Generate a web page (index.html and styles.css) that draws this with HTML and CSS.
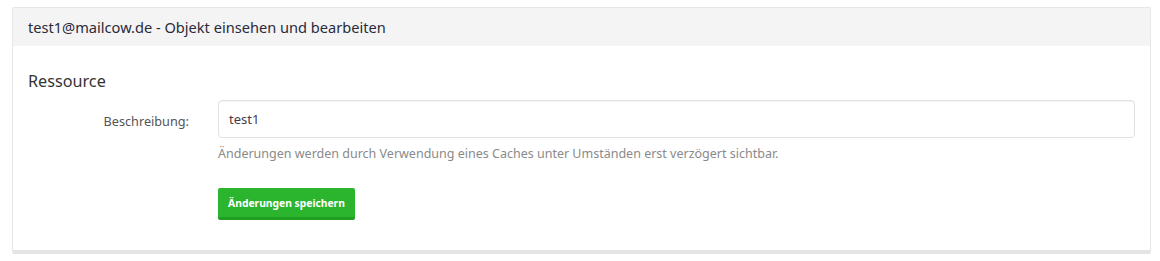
FILE: index.html
```html
<!DOCTYPE html>
<html lang="de">
<head>
<meta charset="utf-8">
<title>Objekt bearbeiten</title>
<link rel="stylesheet" href="styles.css">
</head>
<body>
<div class="panel">
  <div class="panel-heading">test1@mailcow.de - Objekt einsehen und bearbeiten</div>
  <div class="panel-body">
    <h4 class="section-title">Ressource</h4>
    <div class="form-row">
      <label class="form-label" for="desc">Beschreibung:</label>
      <div class="form-field">
        <input id="desc" class="form-input" type="text" value="test1">
        <p class="help">Änderungen werden durch Verwendung eines Caches unter Umständen erst verzögert sichtbar.</p>
      </div>
    </div>
    <div class="form-row">
      <div class="form-label"></div>
      <div class="form-field">
        <button class="btn-save" type="button">Änderungen speichern</button>
      </div>
    </div>
  </div>
</div>
</body>
</html>
```

FILE: styles.css
```css
html, body {
  margin: 0;
  padding: 0;
  background: #fff;
}
body {
  font-family: "Noto Sans", "Open Sans", sans-serif;
  font-size: 13px;
  color: #333;
  padding: 7px 9px 0 12px;
}
.panel {
  border: 1px solid #e6e6e6;
  border-bottom: 4px solid #e5e5e5;
  border-radius: 2px;
  background: #fff;
  height: 247px;
  box-sizing: border-box;
}
.panel-heading {
  background: #f4f4f4;
  height: 38px;
  box-sizing: border-box;
  padding: 9px 15px 0 15px;
  font-size: 14.6px;
  color: #2a2a3a;
}
.panel-body {
  padding: 24px 15px 0 15px;
}
.section-title {
  margin: 0;
  font-size: 16.2px;
  font-weight: normal;
  color: #333;
  height: 30px;
}
.form-row {
  display: flex;
}
.form-label {
  width: 161px;
  flex: none;
  text-align: right;
  padding-top: 12px;
  font-size: 12.7px;
  color: #555;
}
.form-field {
  margin-left: 29px;
  flex: 1;
}
.form-input {
  display: block;
  width: 100%;
  box-sizing: border-box;
  height: 38px;
  border: 1px solid #e2e2e2;
  border-radius: 4px;
  padding: 0 10px;
  font-family: inherit;
  font-size: 13px;
  color: #4a3a4a;
  box-shadow: inset 0 1px 1px rgba(0,0,0,0.05);
  outline: none;
}
.help {
  margin: 7px 0 0 0;
  color: #8a8a8a;
  font-size: 12.5px;
  height: 43px;
}
.btn-save {
  background: #2bb42e;
  border: none;
  border-bottom: 3px solid #229e25;
  border-radius: 2px;
  color: #fff;
  font-family: inherit;
  font-weight: bold;
  font-size: 10.3px;
  height: 32px;
  width: 137px;
  padding: 0;
}
```
